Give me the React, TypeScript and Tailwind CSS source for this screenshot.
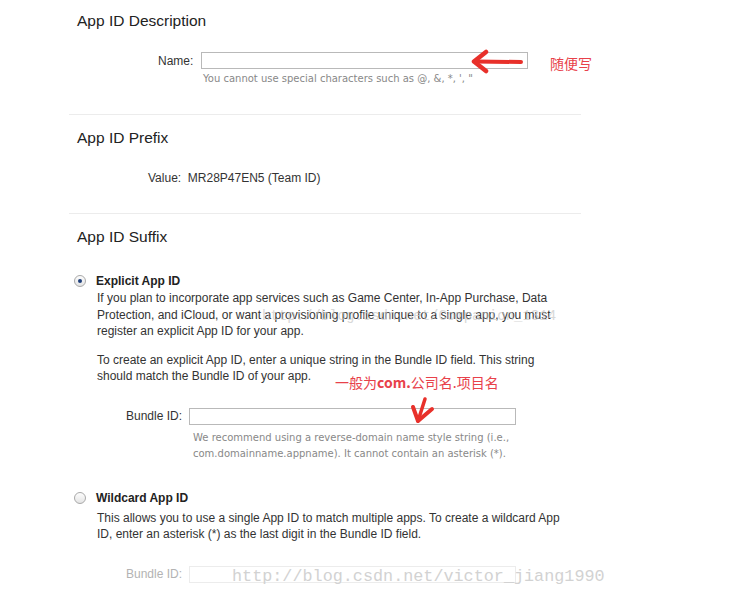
import React from "react";

const red = "#e8302a";

function Radio({ checked }: { checked?: boolean }) {
  return (
    <span className="relative flex h-[12px] w-[12px] shrink-0 items-center justify-center rounded-full border border-[#a9a9a9] bg-gradient-to-b from-[#fdfdfd] to-[#e4e4e4]">
      {checked && <span className="h-[4px] w-[4px] rounded-full bg-[#1f3f7a]" />}
    </span>
  );
}

function Field({ label, width, dim }: { label: string; width: string; dim?: boolean }) {
  return (
    <div className="flex items-center">
      <span className={`${width} shrink-0 whitespace-nowrap text-right text-[12px] leading-[16px] ${dim ? "text-[#b3b3b3]" : "text-[#333]"}`}>
        {label}
      </span>
      <span className={`ml-[9px] block h-[17px] w-[327px] shrink-0 border ${dim ? "border-[#ececec]" : "border-[#b9b9b9]"} bg-white`} />
    </div>
  );
}

export default function App() {
  return (
    <div className="relative h-[603px] w-[740px] overflow-hidden bg-white font-['Liberation_Sans',Arial,sans-serif] text-[#333]">
      {/* App ID Description */}
      <section className="ml-[69px] w-[512px] border-b border-[#ececec] pb-[27px] pt-[11px]">
        <h2 className="pl-[8px] text-[15.5px] leading-[20px] text-[#222]">App ID Description</h2>
        <div className="mt-[21px] pl-[89px]">
          <Field label="Name:" width="w-[34px]" />
          <p className="ml-[45px] mt-[2px] font-['DejaVu_Sans',sans-serif] text-[10px] leading-[16px] text-[#888]">
            You cannot use special characters such as @, &amp;, *, ', "
          </p>
        </div>
      </section>

      {/* App ID Prefix */}
      <section className="ml-[69px] w-[512px] border-b border-[#ececec] pb-[27px] pt-[13px]">
        <h2 className="pl-[8px] text-[15.5px] leading-[20px] text-[#222]">App ID Prefix</h2>
        <p className="mt-[22px] pl-[79px] text-[12px] leading-[16px]">
          Value:&nbsp;&nbsp;MR28P47EN5 (Team ID)
        </p>
      </section>

      {/* App ID Suffix */}
      <section className="ml-[69px] w-[520px] pt-[13px]">
        <h2 className="pl-[8px] text-[15.5px] leading-[20px] text-[#222]">App ID Suffix</h2>

        <div className="mt-[26px] flex items-center gap-[10px] pl-[5px]">
          <Radio checked />
          <span className="text-[12px] font-bold leading-[16px] text-[#222]">Explicit App ID</span>
        </div>
        <div className="relative pl-[28px] text-[12px] leading-[16.5px]">
          <p className="mt-[1px]">
            If you plan to incorporate app services such as Game Center, In-App Purchase, Data
            <br />
            Protection, and iCloud, or want a provisioning profile unique to a single app, you must
            <br />
            register an explicit App ID for your app.
          </p>
          <span className="pointer-events-none absolute left-[193px] top-[17px] font-['Liberation_Mono',monospace] text-[14px] leading-[18px] text-[#c8c8c8] opacity-70">
            http://blog.csdn.net/Companion_1314
          </span>
          <p className="mt-[12px]">
            To create an explicit App ID, enter a unique string in the Bundle ID field. This string
            <br />
            should match the Bundle ID of your app.
          </p>
        </div>
        <div className="mt-[23px] pl-[57px]">
          <Field label="Bundle ID:" width="w-[54px]" />
          <p className="ml-[67px] mt-[5px] font-['DejaVu_Sans',sans-serif] text-[10px] leading-[16px] text-[#888]">
            We recommend using a reverse-domain name style string (i.e.,
            <br />
            com.domainname.appname). It cannot contain an asterisk (*).
          </p>
        </div>

        <div className="mt-[28px] flex items-center gap-[10px] pl-[5px]">
          <Radio />
          <span className="text-[12px] font-bold leading-[16px] text-[#222]">Wildcard App ID</span>
        </div>
        <p className="mt-[4px] pl-[28px] text-[12px] leading-[16.5px]">
          This allows you to use a single App ID to match multiple apps. To create a wildcard App
          <br />
          ID, enter an asterisk (*) as the last digit in the Bundle ID field.
        </p>
        <div className="mt-[23px] pl-[57px]">
          <Field label="Bundle ID:" width="w-[54px]" dim />
        </div>
      </section>

      {/* watermark */}
      <span className="pointer-events-none absolute left-[232px] top-[566px] font-['Liberation_Mono',monospace] text-[16.8px] leading-[22px] text-[#d2d2d2]">
        http://blog.csdn.net/victor_jiang1990
      </span>

      {/* annotations */}
      <svg className="absolute left-[466px] top-[49px]" width="60" height="26" viewBox="0 0 60 26">
        <path d="M55 13 L10 12.5" stroke={red} strokeWidth="4" strokeLinecap="round" fill="none" />
        <path d="M20 3 L8 12.5 L20 22" stroke={red} strokeWidth="4.5" strokeLinecap="round" strokeLinejoin="round" fill="none" />
      </svg>
      <span className="absolute left-[550px] top-[53px] font-['Noto_Sans_CJK_SC',sans-serif] text-[14px] leading-[20px] text-[#e8414a]">
        随便写
      </span>

      <span className="absolute left-[335px] top-[372px] font-['Noto_Sans_CJK_SC',sans-serif] text-[14px] leading-[20px] text-[#e8414a]">
        一般为<span className="font-bold">com.</span>公司名.项目名
      </span>
      <svg className="absolute left-[408px] top-[396px]" width="30" height="30" viewBox="0 0 30 30">
        <path d="M17 3 L10 25" stroke={red} strokeWidth="3.5" strokeLinecap="round" fill="none" />
        <path d="M5 11 L10 25 L24 13" stroke={red} strokeWidth="4" strokeLinecap="round" strokeLinejoin="round" fill="none" />
      </svg>
    </div>
  );
}
